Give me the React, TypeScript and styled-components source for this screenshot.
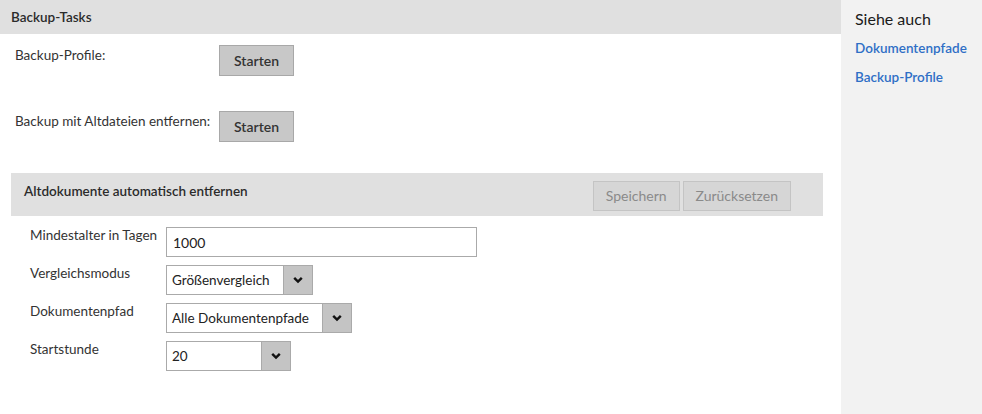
import styled, { createGlobalStyle } from 'styled-components';

const GlobalStyle = createGlobalStyle`
    body {
        margin: 0;
        font-family: Lato, "Open Sans", sans-serif;
        font-size: 13.5px;
        color: #333;
        background: #fff;
    }
`

function Chevron() {
    return (
        <svg width="12" height="8" viewBox="0 0 12 8">
            <path d="M2.2 1.8 L6 5.6 L9.8 1.8" fill="none" stroke="#111" strokeWidth="2.4" />
        </svg>
    )
}

interface ISelectProps {
    value: string;
    width: number;
}

function SelectBox({ value, width }: ISelectProps) {
    return (
        <Select $width={width}>
            <SelectValue>{value}</SelectValue>
            <SelectArrow>
                <Chevron />
            </SelectArrow>
        </Select>
    )
}

function App() {
    return (
        <>
            <GlobalStyle />
            <Page>
                <Main>
                    <PageHeader>Backup-Tasks</PageHeader>
                    <TaskRow>
                        <TaskLabel>Backup-Profile:</TaskLabel>
                        <StartButton>Starten</StartButton>
                    </TaskRow>
                    <TaskRow>
                        <TaskLabel>Backup mit Altdateien entfernen:</TaskLabel>
                        <StartButton>Starten</StartButton>
                    </TaskRow>

                    <Section>
                        <SectionHeader>
                            <SectionTitle>Altdokumente automatisch entfernen</SectionTitle>
                            <HeaderButtons>
                                <DisabledButton disabled>Speichern</DisabledButton>
                                <DisabledButton disabled>Zurücksetzen</DisabledButton>
                            </HeaderButtons>
                        </SectionHeader>
                        <Form>
                            <FieldLabel>Mindestalter in Tagen</FieldLabel>
                            <TextInput defaultValue="1000" />
                            <FieldLabel>Vergleichsmodus</FieldLabel>
                            <SelectBox value="Größenvergleich" width={147} />
                            <FieldLabel>Dokumentenpfad</FieldLabel>
                            <SelectBox value="Alle Dokumentenpfade" width={186} />
                            <FieldLabel>Startstunde</FieldLabel>
                            <SelectBox value="20" width={125} />
                        </Form>
                    </Section>
                </Main>
                <Sidebar>
                    <SidebarTitle>Siehe auch</SidebarTitle>
                    <SidebarLink href="#">Dokumentenpfade</SidebarLink>
                    <SidebarLink href="#">Backup-Profile</SidebarLink>
                </Sidebar>
            </Page>
        </>
    )
}

export default App;

const Page = styled.div`
    display: flex;
    height: 414px;
`

const Main = styled.div`
    width: 841px;
    flex-shrink: 0;
`

const PageHeader = styled.div`
    height: 34px;
    background: #e0e0e0;
    padding-left: 11px;
    display: flex;
    align-items: center;
    font-weight: 600;
    color: #2b2b2b;
`

const TaskRow = styled.div`
    display: grid;
    grid-template-columns: 204px auto;
    align-items: start;
    padding-left: 15px;
    margin-top: 11px;
    & + & {
        margin-top: 35px;
    }
`

const TaskLabel = styled.div`
    padding-top: 2px;
    color: #333;
`

const StartButton = styled.button`
    width: 75px;
    height: 31px;
    background: #c8c8c8;
    border: 1px solid #a8a8a8;
    font-family: inherit;
    font-size: 14px;
    font-weight: 600;
    color: #333;
    padding: 0;
`

const Section = styled.div`
    margin: 31px 18px 0 11px;
`

const SectionHeader = styled.div`
    height: 43px;
    background: #e0e0e0;
    display: flex;
    align-items: center;
    justify-content: space-between;
    padding: 0 32px 0 13px;
`

const SectionTitle = styled.div`
    font-weight: 600;
    color: #2b2b2b;
    margin-top: -8px;
`

const HeaderButtons = styled.div`
    display: flex;
    gap: 3px;
    margin-top: 2px;
`

const DisabledButton = styled.button`
    height: 30px;
    padding: 0 12px;
    background: #d6d6d6;
    border: 1px solid #c4c4c4;
    font-family: inherit;
    font-size: 14px;
    color: #8a8a8a;
`

const Form = styled.div`
    display: grid;
    grid-template-columns: 136px auto;
    row-gap: 8px;
    padding: 11px 0 0 19px;
    justify-items: start;
`

const FieldLabel = styled.div`
    color: #333;
`

const TextInput = styled.input`
    box-sizing: border-box;
    width: 311px;
    height: 30px;
    border: 1px solid #aaa;
    padding: 0 6px;
    font-family: inherit;
    font-size: 14px;
    color: #222;
    outline: none;
`

const Select = styled.div<{ $width: number }>`
    box-sizing: border-box;
    width: ${props => props.$width}px;
    height: 30px;
    border: 1px solid #aaa;
    display: flex;
    background: #fff;
`

const SelectValue = styled.div`
    flex: 1;
    display: flex;
    align-items: center;
    padding-left: 5px;
    color: #222;
    white-space: nowrap;
`

const SelectArrow = styled.div`
    width: 28px;
    background: #c4c4c4;
    border-left: 1px solid #aaa;
    display: flex;
    align-items: center;
    justify-content: center;
`

const Sidebar = styled.div`
    flex: 1;
    background: #f2f2f2;
    padding: 9px 0 0 14px;
    display: flex;
    flex-direction: column;
`

const SidebarTitle = styled.div`
    font-size: 16px;
    color: #1a1a1a;
    margin-bottom: 12px;
`

const SidebarLink = styled.a`
    font-size: 13.5px;
    font-weight: 600;
    color: #2f6fc6;
    text-decoration: none;
    margin-bottom: 13px;
`
